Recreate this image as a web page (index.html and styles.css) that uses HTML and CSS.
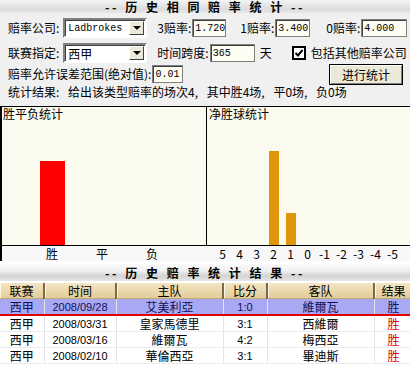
FILE: index.html
```html
<!DOCTYPE html>
<html lang="zh-CN">
<head>
    <meta charset="UTF-8">
    <title>历史相同赔率统计</title>
    <link rel="stylesheet" href="styles.css">
</head>
<body>
    <div class="titlebar"><span>-- 历 史 相 同 赔 率 统 计 --</span></div>

    <div class="panel">
        <div class="row row1">
            <span class="lbl">赔率公司:</span>
            <div class="combo"><span class="mono">Ladbrokes</span><span class="drop"></span></div>
            <span class="lbl ml10">3赔率:</span>
            <input class="box mono w32" value="1.720">
            <span class="lbl ml14">1赔率:</span>
            <input class="box mono w33" value="3.400">
            <span class="lbl ml16">0赔率:</span>
            <input class="box mono w44" value="4.000">
        </div>

        <div class="row row2">
            <span class="lbl">联赛指定:</span>
            <div class="combo"><span>西甲</span><span class="drop"></span></div>
            <span class="lbl ml10">时间跨度:</span>
            <input class="box mono w43" value="365">
            <span class="lbl ml5">天</span>
            <span class="check ml20">
                <svg width="10" height="10" viewBox="0 0 10 10"><polyline points="1.5,5 4,7.5 8.5,2" fill="none" stroke="#000" stroke-width="2"/></svg>
            </span>
            <span class="lbl ml5">包括其他赔率公司</span>
        </div>

        <div class="row row3">
            <span class="lbl">赔率允许误差范围(绝对值):</span>
            <input class="box mono w29" value="0.01">
            <button class="btn">进行统计</button>
        </div>

        <div class="row row4">统计结果: &ensp;给出该类型赔率的场次4, &ensp;其中胜4场, &ensp;平0场, &ensp;负0场</div>
    </div>

    <div class="charts">
        <div class="chart left">
            <div class="plot">
                <div class="cap">胜平负统计</div>
                <div class="bars wdl">
                    <div class="slot"><div class="bar red" style="height:84px"></div></div>
                    <div class="slot"></div>
                    <div class="slot"></div>
                </div>
            </div>
            <div class="axis wdl">
                <span class="slot">胜</span>
                <span class="slot">平</span>
                <span class="slot">负</span>
            </div>
        </div>
        <div class="chart right">
            <div class="plot">
                <div class="cap">净胜球统计</div>
                <div class="bars goals">
                    <div class="slot"></div>
                    <div class="slot"></div>
                    <div class="slot"></div>
                    <div class="slot"><div class="bar orange" style="height:94px"></div></div>
                    <div class="slot"><div class="bar orange" style="height:32px"></div></div>
                    <div class="slot"></div>
                    <div class="slot"></div>
                    <div class="slot"></div>
                    <div class="slot"></div>
                    <div class="slot"></div>
                    <div class="slot"></div>
                </div>
            </div>
            <div class="axis goals">
                <span class="slot">5</span>
                <span class="slot">4</span>
                <span class="slot">3</span>
                <span class="slot">2</span>
                <span class="slot">1</span>
                <span class="slot">0</span>
                <span class="slot">-1</span>
                <span class="slot">-2</span>
                <span class="slot">-3</span>
                <span class="slot">-4</span>
                <span class="slot">-5</span>
            </div>
        </div>
    </div>

    <div class="titlebar second"><span>-- 历 史 赔 率 统 计 结 果 --</span></div>

    <div class="results">
        <table class="grid">
            <thead>
                <tr>
                    <th class="c1">联赛</th>
                    <th class="c2">时间</th>
                    <th class="c3">主队</th>
                    <th class="c4">比分</th>
                    <th class="c5">客队</th>
                    <th class="c6">结果</th>
                </tr>
            </thead>
            <tbody>
                <tr class="sel">
                    <td>西甲</td><td class="num">2008/09/28</td><td>艾美利亞</td><td class="num">1:0</td><td>維爾瓦</td><td class="win">胜</td>
                </tr>
                <tr>
                    <td>西甲</td><td class="num">2008/03/31</td><td>皇家馬德里</td><td class="num">3:1</td><td>西維爾</td><td class="win">胜</td>
                </tr>
                <tr>
                    <td>西甲</td><td class="num">2008/03/16</td><td>維爾瓦</td><td class="num">4:2</td><td>梅西亞</td><td class="win">胜</td>
                </tr>
                <tr>
                    <td>西甲</td><td class="num">2008/02/10</td><td>華倫西亞</td><td class="num">3:1</td><td>畢迪斯</td><td class="win">胜</td>
                </tr>
            </tbody>
        </table>
        <div class="vscroll">
            <div class="arrow"></div>
            <div class="track"></div>
        </div>
    </div>
</body>
</html>
```

FILE: styles.css
```css
body {
    margin: 0;
    background: #ffffff;
    font-family: "Noto Sans CJK SC", "DejaVu Sans", sans-serif;
    font-size: 12px;
    color: #000;
    width: 410px;
    overflow: hidden;
}
.titlebar {
    height: 13px;
    display: flex;
    justify-content: center;
    align-items: center;
    font-weight: bold;
    font-size: 12px;
    line-height: 12px;
    letter-spacing: 2.5px;
    word-spacing: 1px;
    white-space: nowrap;
    background: linear-gradient(#f4f4f4, #dcdcdc 70%, #e8e8e8);
}
.titlebar.second {
    margin-top: 3px;
    height: 17px;
    background: linear-gradient(#fafafa, #f0f0f0 40%, #d4d4d4 70%, #e6e6e6);
}
.panel {
    background: #f0f0f0;
    padding: 4px 0 0 8px;
    height: 93px;
    box-sizing: border-box;
}
.row {
    display: flex;
    align-items: center;
    white-space: nowrap;
}
.row1 { height: 22px; }
.row2 { height: 20px; margin-top: 4px; }
.row3 { height: 20px; margin-top: 1px; }
.row4 { height: 14px; margin-top: 0; }
.lbl { line-height: 14px; }
.ml5 { margin-left: 5px; }
.ml10 { margin-left: 10px; }
.ml14 { margin-left: 14px; }
.ml16 { margin-left: 16px; }
.ml20 { margin-left: 20px; }
.mono {
    font-family: "Liberation Mono", monospace;
    font-size: 10px;
}
.combo {
    margin-left: 4px;
    width: 77px;
    height: 16px;
    display: flex;
    align-items: center;
    justify-content: space-between;
    background: #fff;
    border: 2px solid;
    border-color: #808080 #ffffff #ffffff #808080;
    box-shadow: inset 1px 1px 0 #404040;
    padding-left: 3px;
}
.drop {
    width: 15px;
    height: 14px;
    margin-right: 1px;
    background: #ece9d8;
    border: 1px solid;
    border-color: #fff #404040 #404040 #fff;
    box-sizing: border-box;
    position: relative;
}
.drop::after {
    content: "";
    position: absolute;
    left: 3px;
    top: 4px;
    border-left: 4px solid transparent;
    border-right: 4px solid transparent;
    border-top: 4px solid #000;
}
.box {
    margin: 0 0 0 1px;
    height: 16px;
    padding: 0 0 0 2px;
    background: #fdfdf2;
    border: 1px solid #808080;
    box-shadow: inset 1px 1px 0 #404040;
    box-sizing: content-box;
    outline: none;
    color: #000;
}
.w29 { width: 27px; }
.w32 { width: 30px; }
.w33 { width: 31px; }
.w43 { width: 41px; }
.w44 { width: 42px; }
.check {
    width: 10px;
    height: 10px;
    border: 2px solid #000;
    background: #fff;
    display: flex;
}
.btn {
    margin-left: auto;
    margin-right: 7px;
    width: 74px;
    height: 21px;
    font-family: "Noto Sans CJK SC", sans-serif;
    font-size: 12px;
    background: #ece9d8;
    border: 1px solid #000;
    box-shadow: inset 1px 1px 0 #fff, inset -1px -1px 0 #808080;
    padding: 0;
}
.charts {
    display: grid;
    grid-template-columns: 207px 1fr;
    border-top: 1px solid #000;
}
.plot {
    height: 138px;
    background: #fbfaee;
    border-bottom: 1px solid #000;
    display: flex;
    flex-direction: column;
}
.left .plot {
    border-left: 2px solid #000;
    border-right: 1px solid #000;
}
.left .axis { border-left: 2px solid #000; }
.cap {
    line-height: 13px;
    padding-left: 1px;
    flex: none;
}
.right .cap { padding-left: 2px; }
.bars {
    flex: 1;
    display: flex;
    align-items: flex-end;
}
.axis {
    display: flex;
    height: 15px;
    line-height: 15px;
    background: #f8f8f8;
}
.wdl { padding-left: 25px; }
.wdl .slot { width: 50px; }
.goals { padding-left: 7px; }
.goals .slot { width: 17px; }
.slot {
    display: flex;
    justify-content: center;
    align-items: flex-end;
    height: 100%;
}
.bar.red { width: 25px; background: #ff0000; }
.bar.orange { width: 10px; background: #e0960a; }
.results {
    display: flex;
    margin-top: 2px;
}
.grid {
    border-collapse: collapse;
    width: 402px;
    table-layout: fixed;
}
.grid th {
    height: 15px;
    padding: 0;
    font-weight: normal;
    line-height: 14px;
    background: linear-gradient(#f4e6c4, #e2cc98);
    border-right: 2px solid #7a6a4a;
    border-bottom: 1px solid #c0a878;
    box-shadow: inset 1px 0 0 #fff8e8;
}
.c1 { width: 43px; }
.c2 { width: 70px; }
.c3 { width: 105px; }
.c4 { width: 42px; }
.c5 { width: 105px; }
.c6 { width: 37px; }
.grid td {
    height: 15px;
    padding: 0;
    line-height: 14px;
    text-align: center;
    border-right: 1px solid #e4e4e4;
    border-bottom: 1px solid #ececec;
}
.grid td.num {
    font-family: "Liberation Sans", sans-serif;
    font-size: 11px;
}
.grid tr.sel td {
    background: #a8a8f4;
    border-bottom: 2px solid #e00000;
    color: #10105a;
}
.grid td.win { color: #e00000; }
.vscroll {
    margin-left: 2px;
    width: 10px;
}
.arrow {
    height: 28px;
    background: #ece9d8;
    border: 1px solid;
    border-color: #fff #808080 #808080 #fff;
    position: relative;
}
.arrow::after {
    content: "";
    position: absolute;
    left: 3px;
    top: 4px;
    border-left: 3px solid transparent;
    border-right: 3px solid transparent;
    border-bottom: 3px solid #000;
}
.track {
    height: 44px;
    border-left: 1px solid #a0a0a0;
    background: #f4f4f4;
}
```
